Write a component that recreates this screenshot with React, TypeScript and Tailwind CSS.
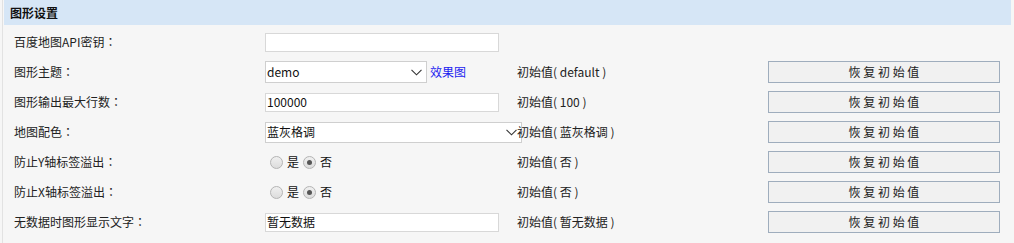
import React from "react";

const font = { fontFamily: '"Noto Sans CJK SC", "Liberation Sans", sans-serif' };
const colonFont = { fontFamily: '"Noto Sans CJK TC", "Noto Sans CJK SC", sans-serif' };

function Chevron() {
  return (
    <svg width="11" height="7" viewBox="0 0 11 7" className="shrink-0">
      <path d="M0.5 0.8 L5.5 5.8 L10.5 0.8" fill="none" stroke="#333" strokeWidth="1.1" />
    </svg>
  );
}

function Radio({ checked }: { checked?: boolean }) {
  return (
    <span className="inline-flex h-[13px] w-[13px] items-center justify-center rounded-full border border-[#b4b4b4] bg-gradient-to-b from-[#f0f0f0] to-[#dcdcdc]">
      {checked && <span className="h-[5px] w-[5px] rounded-full bg-[#555]" />}
    </span>
  );
}

function ResetButton() {
  return (
    <button
      type="button"
      className="h-[22px] w-[232px] border border-[#9fadbd] bg-[#f1f1f1] text-[12px] text-[#222]"
    >
      恢 复 初 始 值
    </button>
  );
}

type Row = {
  label: string;
  field: React.ReactNode;
  init?: string;
};

const textInput = (value: string) => (
  <div className="flex h-[19px] w-[234px] items-center border border-[#d8d8d8] bg-white pl-[1px] text-[12px] text-[#111]">
    {value}
  </div>
);

const radioPair = (
  <div className="flex items-center pl-[5px] text-[12px] text-[#111]">
    <Radio />
    <span className="ml-[4px] mr-[4px]">是</span>
    <Radio checked />
    <span className="ml-[4px]">否</span>
  </div>
);

const rows: Row[] = [
  { label: "百度地图API密钥", field: textInput("") },
  {
    label: "图形主题",
    field: (
      <div className="flex items-center">
        <div className="flex h-[22px] w-[162px] items-center justify-between border border-[#cfcfcf] bg-white pl-[1px] pr-[4px] text-[12px] text-[#111]">
          <span>demo</span>
          <Chevron />
        </div>
        <a className="ml-[3px] text-[12px] text-[#1c1cf0]">效果图</a>
      </div>
    ),
    init: "初始值( default )",
  },
  { label: "图形输出最大行数", field: textInput("100000"), init: "初始值( 100 )" },
  {
    label: "地图配色",
    field: (
      <div className="flex h-[21px] w-[257px] items-center justify-between border border-[#cfcfcf] bg-white pl-[1px] pr-[4px] text-[12px] text-[#111]">
        <span>蓝灰格调</span>
        <Chevron />
      </div>
    ),
    init: "初始值( 蓝灰格调 )",
  },
  { label: "防止Y轴标签溢出", field: radioPair, init: "初始值( 否 )" },
  { label: "防止X轴标签溢出", field: radioPair, init: "初始值( 否 )" },
  { label: "无数据时图形显示文字", field: textInput("暂无数据"), init: "初始值( 暂无数据 )" },
];

export default function App() {
  return (
    <div className="h-[243px] w-[1014px] bg-[#f6f6f6] pl-[2px]" style={font}>
      <div className="h-full w-[1009px] border-l border-[#e2e2e2]">
        <div className="ml-[1px] flex h-[25px] items-center bg-[#d6e6f6] pl-[6px] text-[12px] font-bold text-[#111]">
          图形设置
        </div>
        <div className="pt-[2px]">
          {rows.map((r, i) => (
            <div
              key={i}
              className="grid h-[30px] grid-cols-[262px_252px_251px_232px] items-center text-[12px] text-[#222]"
            >
              <div className="pl-[11px]">
                {r.label}
                <span style={colonFont}>：</span>
              </div>
              <div className="min-w-0">{r.field}</div>
              <div className="relative">{r.init}</div>
              <div>{r.init && <ResetButton />}</div>
            </div>
          ))}
        </div>
      </div>
    </div>
  );
}
